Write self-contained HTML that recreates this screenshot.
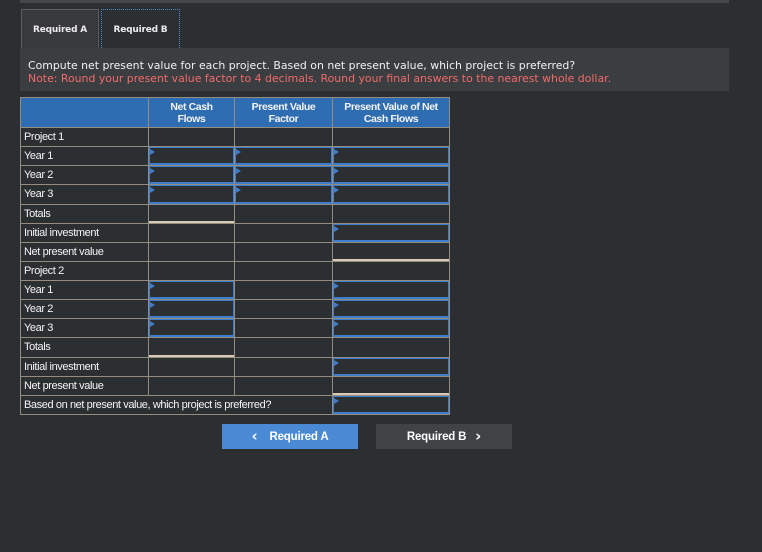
<!DOCTYPE html>
<html><head><style>
*{margin:0;padding:0;box-sizing:border-box}
body{width:762px;height:552px;background:#2c2f31;font-family:"Liberation Sans",sans-serif;position:relative;overflow:hidden}
.topbar{position:absolute;left:20px;top:0;width:709px;height:3px;background:#45484b}
.tab{position:absolute;top:9px;height:39px;border:1px solid #5a5e62;border-bottom:none;color:#ececec;font-family:"DejaVu Sans",sans-serif;font-size:9px;font-weight:bold;text-align:center;line-height:40px;letter-spacing:-0.2px}
.ta{left:21px;width:78px;background:#37393c}
.tb{left:101px;width:79px;background:#2c2f31;border:1px dotted #4a8ad4;border-bottom:none}
.inst{position:absolute;left:20px;top:48px;width:709px;height:43px;background:#3b3e41;padding:11px 0 0 8px;font-family:"DejaVu Sans",sans-serif;font-size:10.9px;line-height:13px;color:#f0f0f0}
.inst .n{color:#f06a6a}
.grid{position:absolute;left:20px;top:97px;width:430px;background:#958c80;padding:1px;display:grid;grid-template-columns:127px 85px 97px 116px;grid-template-rows:29px repeat(15,18.13px);gap:1px}
.grid>div{background:#2c2f31;color:#f4f4f4;font-size:11px;font-weight:500;letter-spacing:-0.4px;line-height:19px;padding-left:3px;position:relative}
.grid>.h{background:#2f6db2;font-weight:bold;text-align:center;padding:3px 0 0;line-height:12px;font-size:10.5px}
.grid>.h0{background:#2f6db2}
.in::after{content:"";position:absolute;left:0;top:0;right:0;bottom:0;border:solid #3d7dcc;border-width:1px 1px 2px 1px}
.in::before{content:"";position:absolute;left:1px;top:2px;border-left:5px solid #3d7dcc;border-top:3px solid transparent;border-bottom:3px solid transparent}
.ul::after{content:"";position:absolute;left:0;right:0;bottom:0;height:2px;background:#d8cab6}
.sp{grid-column:1/4}
.btn{position:absolute;top:424px;height:25px;width:136px;color:#fff;font-size:11.5px;font-weight:bold;text-align:center;line-height:26px;letter-spacing:-0.2px}
.ch{font-size:15px;font-weight:bold;font-family:"DejaVu Sans",sans-serif;vertical-align:top;line-height:24px}
.ba{left:222px;background:#4a8ad4}
.bb{left:376px;background:#404346}
</style></head><body>
<div class="topbar"></div>
<div class="tab ta">Required A</div>
<div class="tab tb">Required B</div>
<div class="inst">Compute net present value for each project. Based on net present value, which project is preferred?<br><span class="n">Note: Round your present value factor to 4 decimals. Round your final answers to the nearest whole dollar.</span></div>
<div class="grid">
<div class="h0"></div><div class="h">Net Cash<br>Flows</div><div class="h">Present Value<br>Factor</div><div class="h">Present Value of Net<br>Cash Flows</div>
<div>Project 1</div><div></div><div></div><div></div>
<div>Year 1</div><div class="in"></div><div class="in"></div><div class="in"></div>
<div>Year 2</div><div class="in"></div><div class="in"></div><div class="in"></div>
<div>Year 3</div><div class="in"></div><div class="in"></div><div class="in"></div>
<div>Totals</div><div class="ul"></div><div></div><div></div>
<div>Initial investment</div><div></div><div></div><div class="in"></div>
<div>Net present value</div><div></div><div></div><div class="ul"></div>
<div>Project 2</div><div></div><div></div><div></div>
<div>Year 1</div><div class="in"></div><div></div><div class="in"></div>
<div>Year 2</div><div class="in"></div><div></div><div class="in"></div>
<div>Year 3</div><div class="in"></div><div></div><div class="in"></div>
<div>Totals</div><div class="ul"></div><div></div><div></div>
<div>Initial investment</div><div></div><div></div><div class="in"></div>
<div>Net present value</div><div></div><div></div><div class="ul"></div>
<div class="sp">Based on net present value, which project is preferred?</div><div class="in"></div>
</div>
<div class="btn ba"><span class="ch">&lsaquo;</span>&nbsp;&nbsp;&nbsp; Required A</div>
<div class="btn bb">Required B &nbsp;&nbsp;<span class="ch">&rsaquo;</span></div>
</body></html>
